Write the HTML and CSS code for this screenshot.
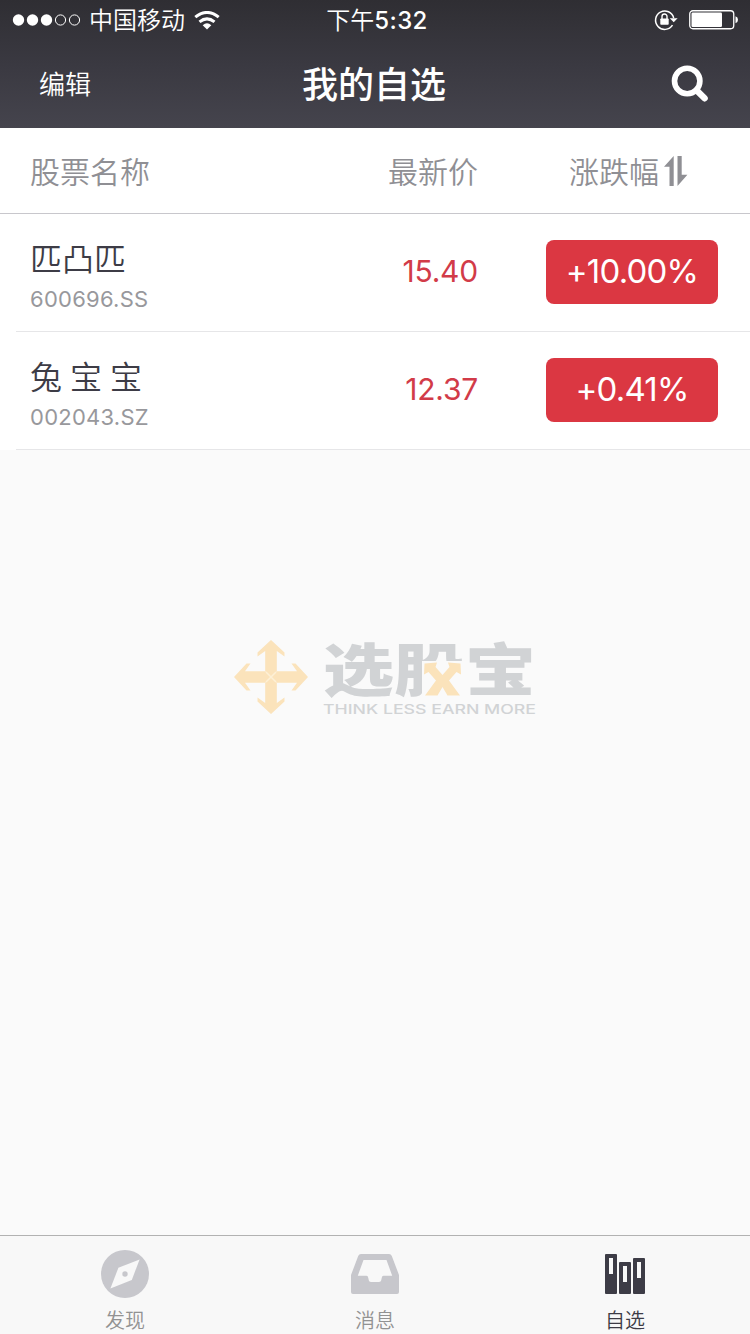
FILE: index.html
```
<!DOCTYPE html>
<html lang="zh-CN">
    <head>
        <meta charset="utf-8">
        <title>我的自选</title>
        <link rel="stylesheet" href="styles.css">
    </head>
    <body>
        <div class="header">
            <div class="status">
                <div class="status_left">
                    <svg class="signal" width="70" height="14" viewBox="0 0 70 14">
                        <g fill="#fff"><circle cx="6.5" cy="7" r="5.7"/><circle cx="20.5" cy="7" r="5.7"/><circle cx="34.5" cy="7" r="5.7"/></g>
                        <g fill="none" stroke="#fff"><circle cx="48.5" cy="7" r="5.1"/><circle cx="62.5" cy="7" r="5.1"/></g>
                    </svg>
                    <span class="carrier">中国移动</span>
                    <svg class="wifi" width="26" height="19" viewBox="0 0 26 19">
                        <g fill="none" stroke="#fff" stroke-width="3">
                            <path d="M1.3 6.2Q13 -3.3 24.7 6.2"/>
                            <path d="M5.5 10.9Q13 4.8 20.5 10.9"/>
                        </g>
                        <path d="M8.7 14.2Q13 10.4 17.3 14.2L13 18.6Z" fill="#fff"/>
                    </svg>
                </div>
                <div class="time"><span>下午</span>5:32</div>
                <div class="status_right">
                    <svg width="24" height="22" viewBox="0 0 24 22">
                        <path d="M18.5 16.2A9.2 9.2 0 1 1 19.7 9" fill="none" stroke="#fff" stroke-width="1.5"/>
                        <path d="M15.8 9.2H23.6L19.7 13.2Z" fill="#fff"/>
                        <rect x="6.3" y="9.5" width="8.4" height="6.3" rx=".8" fill="#fff"/>
                        <path d="M8 10V7.5a2.5 2.5 0 0 1 5 0V10" fill="none" stroke="#fff" stroke-width="1.4"/>
                    </svg>
                    <svg width="50" height="20" viewBox="0 0 50 20">
                        <rect x=".75" y=".75" width="44" height="18" rx="3.2" fill="none" stroke="#fff" stroke-width="1.3"/>
                        <rect x="2.5" y="2.5" width="30.5" height="14.5" rx="1.2" fill="#fff"/>
                        <path d="M46.5 6.3Q49 7 49 9.8T46.5 13.3Z" fill="#fff"/>
                    </svg>
                </div>
            </div>
            <div class="nav">
                <div class="nav_edit">编辑</div>
                <div class="nav_title">我的自选</div>
                <div class="nav_search">
                    <svg width="38" height="38" viewBox="0 0 38 38">
                        <g fill="none" stroke="#fff"><circle cx="16.2" cy="16" r="12.7" stroke-width="5.6"/><path d="M25.5 25.2L33.6 33.3" stroke-width="6.4" stroke-linecap="round"/></g>
                    </svg>
                </div>
            </div>
        </div>

        <div class="row thead">
            <div class="th">股票名称</div>
            <div class="th col_price">最新价</div>
            <div class="col_sort">
                <span class="th">涨跌幅</span>
                <svg width="24" height="30" viewBox="0 0 24 30" fill="#8f8f94">
                    <path d="M9.7 0V30H5.5V10.7H0Z"/>
                    <path d="M13.5 0H17.7V18.7H23.4L13.5 30Z"/>
                </svg>
            </div>
        </div>

        <div class="list">
            <div class="row stock">
                <div class="stock_info">
                    <div class="stock_name">匹凸匹</div>
                    <div class="stock_code">600696.SS</div>
                </div>
                <div class="col_price price">15.40</div>
                <div class="badge">+10.00%</div>
            </div>
            <div class="row stock">
                <div class="stock_info">
                    <div class="stock_name spaced">兔 宝 宝</div>
                    <div class="stock_code">002043.SZ</div>
                </div>
                <div class="col_price price">12.37</div>
                <div class="badge">+0.41%</div>
            </div>
        </div>

        <div class="content">
            <svg class="logo" width="304" height="80" viewBox="0 0 304 80">
                <!-- 四向箭头 -->
                <g fill="#fbe3bb">
                    <path id="arrow" d="M38 2L51.5 14.5V18.5L43.8 13V33.2L38 39L32.2 33.2V13L24.5 18.5V14.5Z"/>
                    <use href="#arrow" transform="rotate(90 38 39)"/>
                    <use href="#arrow" transform="rotate(180 38 39)"/>
                    <use href="#arrow" transform="rotate(270 38 39)"/>
                </g>
                <path d="M33 34L43 44M43 34L33 44" stroke="#fdf0d6" stroke-width="1.5"/>
                <text class="logo_name" transform="translate(90 53.2) scale(1 .8)" textLength="213" lengthAdjust="spacingAndGlyphs">选股宝</text>
                <!-- 股字右下的交叉箭头 -->
                <path d="M189 23H231V62H189Z" fill="#fafafa"/>
                <path d="M191.5 25.5L204 24.5L202.5 29L209.5 37L216.5 29L215 24.5L227.5 25.5L228 36.5L223.5 34L216 42.5L227 57.5H214.5L209.5 49L204.5 57.5H192L203 42.5L195.5 34L191 36.5Z" fill="#fbe3bb"/>
                <text class="logo_slogan" x="90" y="76" textLength="213" lengthAdjust="spacingAndGlyphs">THINK LESS EARN MORE</text>
            </svg>
        </div>

        <div class="tabbar">
            <div class="tab">
                <svg width="48" height="48" viewBox="0 0 48 48">
                    <circle cx="24" cy="24" r="24" fill="#c7c7cc"/>
                    <path d="M38.6 9.4L30.8 30L9.4 38.6L17.4 17.8Z" fill="#f8f8f8"/>
                    <circle cx="24" cy="24" r="2.7" fill="#c7c7cc"/>
                </svg>
                <span>发现</span>
            </div>
            <div class="tab">
                <svg width="48" height="48" viewBox="0 0 48 48">
                    <path d="M10 4H38Q40 4 40.8 6L48 25V42Q48 44 46 44H2Q0 44 0 42V25L7.2 6Q8 4 10 4ZM12.5 10L6.8 25.7H15.5Q17 25.7 17.3 28L17.8 30.3Q18 32 20 32H28Q30 32 30.2 30.3L30.7 28Q31 25.7 32.5 25.7H41.2L35.5 10Z" fill="#c7c7cc" fill-rule="evenodd"/>
                </svg>
                <span>消息</span>
            </div>
            <div class="tab tab_on">
                <svg width="48" height="48" viewBox="0 0 48 48" fill="#3d3c46">
                    <path fill-rule="evenodd" d="M5 4H15Q16 4 16 5V43Q16 44 15 44H5Q4 44 4 43V5Q4 4 5 4ZM8 8V24H12V8Z"/>
                    <path fill-rule="evenodd" d="M19 12H29Q30 12 30 13V43Q30 44 29 44H19Q18 44 18 43V13Q18 12 19 12ZM22 16V32H26V16Z"/>
                    <path fill-rule="evenodd" d="M33 8H43Q44 8 44 9V43Q44 44 43 44H33Q32 44 32 43V9Q32 8 33 8ZM36 12V28H40V12Z"/>
                </svg>
                <span>自选</span>
            </div>
        </div>
    </body>
</html>
```
FILE: styles.css
```
*{
	box-sizing: border-box;
}
body{
	margin: 0;
	width: 750px;
	height: 1334px;
	display: flex;
	flex-direction: column;
	overflow: hidden;
	background: #fafafa;
	color: #3d3c46;
	font-family: Inter, "Noto Sans CJK SC", sans-serif;
}
svg{
	display: block;
}

/* 顶部 */
.header{
	height: 128px;
	background: linear-gradient(#2f2e33, #3a3941 50%, #45444d);
	color: #fff;
}
.status, .nav{
	display: grid;
	grid-template-columns: 1fr auto 1fr;
	align-items: center;
}
.status{
	height: 40px;
	padding: 0 11px 0 12px;
	font-size: 24px;
	line-height: 36px;
}
.status_left, .status_right{
	display: flex;
	align-items: center;
}
.signal{
	margin-right: 7px;
}
.carrier{
	padding-top: 2px;
	font-weight: 350;
}
.wifi{
	margin-left: 9px;
}
.time{
	padding: 1px 0 0 3px;
	font-weight: 500;
	letter-spacing: .4px;
}
.time span{
	font-weight: 350;
	letter-spacing: 0;
}
.status_right{
	justify-content: flex-end;
	gap: 11px;
}
.nav{
	height: 88px;
	padding: 0 41px 0 39px;
}
.nav_edit{
	padding-bottom: 3px;
	font-size: 26px;
	font-weight: 350;
}
.nav_title{
	padding-bottom: 4px;
	font-size: 36px;
	font-weight: 500;
}
.nav_search{
	justify-self: end;
}

/* 列表 */
.row{
	display: grid;
	grid-template-columns: 1fr 148px 240px;
	align-items: center;
}
.thead{
	height: 86px;
	padding: 0 32px 0 30px;
	border-bottom: 1px solid #c8c7cc;
	background: #fff;
	color: #8f8f94;
	font-size: 30px;
	font-weight: 350;
}
.th{
	padding-bottom: 2px;
}
.col_price{
	text-align: right;
}
.col_sort{
	display: flex;
	align-items: center;
	justify-content: flex-end;
	gap: 5px;
	padding-right: 30px;
}
.list{
	background: #fff;
}
.stock{
	height: 118px;
	margin-left: 16px;
	padding: 0 32px 2px 14px;
	border-bottom: 1px solid #e6e6e8;
}
.stock_info{
	padding-top: 13px;
}
.stock_name{
	font-size: 32px;
	font-weight: 350;
	line-height: 42px;
}
.spaced{
	word-spacing: -1px;
}
.stock_code{
	color: #98989c;
	font-size: 22px;
	line-height: 36px;
	letter-spacing: .25px;
}
.price{
	padding-bottom: 2px;
	color: #d23b48;
	font-size: 30px;
	letter-spacing: -.2px;
}
.badge{
	justify-self: end;
	width: 172px;
	height: 64px;
	border-radius: 8px;
	background: #db3742;
	color: #fff;
	font-size: 33px;
	line-height: 63px;
	letter-spacing: -.8px;
	text-align: center;
}

/* 水印 */
.content{
	flex: 1;
	padding: 188px 0 0 233px;
}
.logo{
	overflow: visible;
}
.logo_name{
	fill: #d1d3d5;
	font-family: "Noto Sans CJK SC", sans-serif;
	font-size: 71px;
	font-weight: 900;
}
.logo_slogan{
	fill: #d1d3d5;
	font-size: 13px;
	font-weight: 500;
}

/* 底部标签 */
.tabbar{
	display: flex;
	height: 99px;
	border-top: 1px solid #b2b2b2;
	background: #f8f8f8;
}
.tab{
	flex: 1;
	display: flex;
	flex-direction: column;
	align-items: center;
	padding-top: 14px;
	color: #929292;
	font-size: 20px;
	font-weight: 350;
	line-height: 24px;
}
.tab span{
	margin-top: 11px;
}
.tab_on{
	color: #3d3c46;
}
```
